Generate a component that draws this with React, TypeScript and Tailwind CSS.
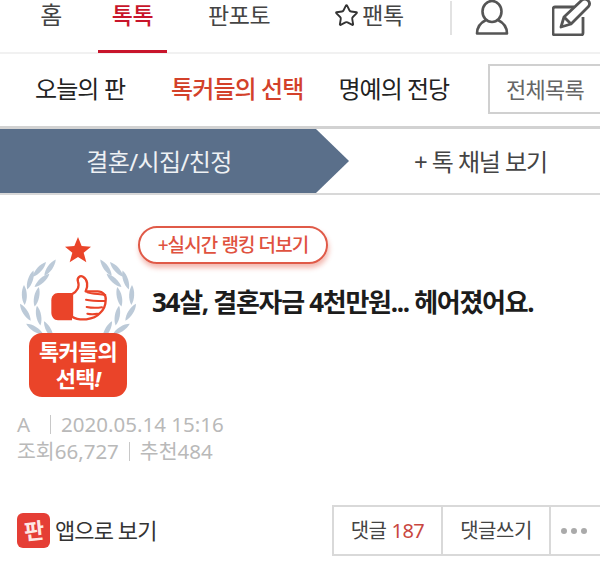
import { Star } from "lucide-react";

const font = `font-['Noto_Sans','Noto_Sans_CJK_KR',sans-serif]`;

// wreath leaves on the left side, mirrored for the right one: [x, y, rotation]
const leaves: [number, number, number][] = [
  [118, 163, 42],
  [150, 158, 35],
  [91, 195, 18],
  [126, 196, 48],
  [73, 240, -2],
  [110, 245, 12],
  [76, 292, -32],
  [116, 302, -10],
  [104, 342, -58],
  [146, 345, -28],
];

function Badge() {
  return (
    <div className="flex w-[116px] flex-col items-center">
      <svg width="116" height="100" viewBox="60 60 348 300" className="-mb-[2px] -mt-px">
        <path fill="#ea4429" d="M234 66l11 27 28 2-22 18 8 29-25-16-25 16 8-29-22-18 28-2z" />
        {leaves.map(([x, y, r]) => (
          <g key={`${x}-${y}`} fill="#bccad8">
            <path d="M0-30C10-14 10 14 0 30C-10 14-10-14 0-30z" transform={`translate(${x} ${y}) rotate(${r})`} />
            <path d="M0-30C10-14 10 14 0 30C-10 14-10-14 0-30z" transform={`translate(${468 - x} ${y}) rotate(${-r})`} />
          </g>
        ))}
        <path fill="#ea4429" d="M216 234h-42c-12 0-20 10-20 22v36c0 14 8 24 20 24h42z" />
        <path
          fill="#fff"
          stroke="#ea4429"
          strokeWidth="7"
          strokeLinejoin="round"
          d="M216 238c14-8 24-22 18-38-4-12 6-20 15-15 14 8 16 28 8 44h36c16 0 26 12 24 26 0 16-6 30-18 40-8 10-22 16-40 18-18 1-34-2-43-8z"
        />
        <path
          fill="none"
          stroke="#ea4429"
          strokeWidth="6"
          strokeLinecap="round"
          d="M262 232c18 6 38 4 54 8M258 254c16 4 38 4 56 4M260 276c14 3 32 3 46 1M262 296c10 2 20 2 30 0"
        />
      </svg>
      <div className="flex h-[64px] w-[98px] flex-col items-center justify-center rounded-[13px] bg-[#ea4429] text-[22px] leading-[27px] font-bold tracking-[-0.8px] text-white">
        <span>톡커들의</span>
        <span>
          선택<i>!</i>
        </span>
      </div>
    </div>
  );
}

function UserIcon() {
  return (
    <svg width="34" height="36" viewBox="0 0 34 36" fill="none" stroke="#555" strokeWidth="2.6">
      <ellipse cx="17" cy="12.5" rx="9.5" ry="10.5" />
      <path d="M11 21C5 24 2 28 2 34.5h30C32 28 29 24 23 21" strokeLinejoin="round" />
    </svg>
  );
}

function EditIcon() {
  return (
    <svg width="40" height="38" viewBox="0 0 40 38" fill="none" stroke="#555" strokeWidth="2.8" strokeLinejoin="round">
      <path d="M22 9H3a2 2 0 0 0-2 2v24a2 2 0 0 0 2 2h26a2 2 0 0 0 2-2V19" />
      <path d="M9 29l3-10L30 2c2-1.500 4-1.500 6 .5s2 4 .5 6L19 26z" />
      <path d="M12 19l7 7" />
    </svg>
  );
}

export default function App() {
  return (
    <div className={`${font} h-[574px] w-[600px] overflow-hidden bg-white`}>
      {/* top nav */}
      <nav className="flex h-[54px] items-center border-b-2 border-[#f1f1f1] text-[23px] tracking-[-0.4px] text-[#444]">
        <a className="ml-[8px] w-[86px] pb-[22px] text-center text-[24px] leading-[30px]">홈</a>
        <a className="relative ml-[4px] w-[69px] pb-[22px] text-center leading-[30px] font-medium text-[#c8152b]">
          톡톡
          <span className="absolute inset-x-0 bottom-[-1px] h-[3px] bg-[#c8152b]" />
        </a>
        <a className="ml-[41px] pb-[22px] leading-[30px]">판포토</a>
        <a className="ml-[64px] flex items-center gap-[3px] pb-[22px] leading-[30px]">
          <Star size={25} strokeWidth={1.8} className="text-[#333]" />
          팬톡
        </a>
        <span className="ml-[46px] mb-[16px] h-[34px] w-[2px] bg-[#e2e2e2]" />
        <span className="ml-[23px] mb-[18px]">
          <UserIcon />
        </span>
        <span className="ml-[43px] mb-[18px]">
          <EditIcon />
        </span>
      </nav>

      {/* sub nav */}
      <div className="flex h-[75px] items-center border-b-[3px] border-[#d2d2d2] pb-[2px] text-[24px] tracking-[-0.9px] text-[#222]">
        <a className="ml-[35px]">오늘의 판</a>
        <a className="ml-[46px] font-medium text-[#d3412a]">톡커들의 선택</a>
        <a className="ml-[35px] tracking-[-1px]">명예의 전당</a>
        <a className="ml-[39px] flex h-[50px] flex-1 items-center justify-center border-2 border-r-0 border-[#d0d0d0] text-[22px] tracking-[-0.7px] text-[#666]">
          전체목록
        </a>
      </div>

      {/* channel band */}
      <div className="flex h-[66px] border-b-[2px] border-[#d8d8d8]">
        <div className="flex w-[349px] items-center bg-[#5a6f8a] pt-[1px] [clip-path:polygon(0_0,316px_0,100%_50%,316px_100%,0_100%)]">
          <span className="w-[318px] text-center text-[24px] tracking-[-0.6px] text-[#eef1f4]">결혼/시집/친정</span>
        </div>
        <div className="flex flex-1 items-center pl-[65px] pt-[1px] text-[24px] tracking-[-1.1px] text-[#444]">+ 톡 채널 보기</div>
      </div>

      {/* post header */}
      <div className="flex pl-[20px] pt-[31px]">
        <div className="pt-[10px]">
          <Badge />
        </div>
        <div className="ml-[2px]">
          <a className="flex h-[38px] w-[190px] items-center justify-center rounded-full border-2 border-[#e05a48] text-[19px] font-medium tracking-[-0.9px] text-[#e0523f] shadow-[1px_4px_5px_rgba(224,82,63,0.4)]">
            +실시간 랭킹 더보기
          </a>
          <h1 className="ml-[14px] mt-[20px] text-[26px] leading-[36px] font-bold tracking-[-1.3px] whitespace-nowrap text-[#1c1c1c]">
            34살, 결혼자금 4천만원... 헤어졌어요.
          </h1>
        </div>
      </div>

      {/* meta */}
      <div className="mt-[14px] pl-[17px] text-[20.5px] leading-[27px] text-[#b9b9b9]">
        <div className="flex items-center">
          A<span className="ml-[20px] mr-[10px] h-[19px] w-px bg-[#c8c8c8]" />
          2020.05.14 15:16
        </div>
        <div className="flex items-center">
          조회66,727
          <span className="mx-[10px] h-[19px] w-px bg-[#c8c8c8]" />
          추천484
        </div>
      </div>

      {/* footer */}
      <div className="mt-[40px] flex items-center">
        <a className="ml-[17px] flex items-center gap-[5px] text-[22px] tracking-[-0.9px] text-[#333]">
          <span className="flex h-[35px] w-[33px] items-center justify-center rounded-[6px] bg-[#e53e35] text-[22px] font-bold text-[#fde8e5]">
            <span className="-rotate-6">판</span>
          </span>
          앱으로 보기
        </a>
        <div className="ml-auto flex h-[51px] w-[268px] border-2 border-r-0 border-[#d9d9d9] text-[20px] tracking-[-0.5px] text-[#444]">
          <a className="flex w-[109px] items-center justify-center gap-[5px] border-r-2 border-[#d9d9d9]">
            댓글 <span className="text-[#c9473f]">187</span>
          </a>
          <a className="flex w-[108px] items-center justify-center border-r-2 border-[#d9d9d9]">댓글쓰기</a>
          <a className="flex flex-1 items-center justify-center gap-[4px] pr-[3px]">
            <span className="h-[6px] w-[6px] rounded-full bg-[#aaa]" />
            <span className="h-[6px] w-[6px] rounded-full bg-[#aaa]" />
            <span className="h-[6px] w-[6px] rounded-full bg-[#aaa]" />
          </a>
        </div>
      </div>
    </div>
  );
}
